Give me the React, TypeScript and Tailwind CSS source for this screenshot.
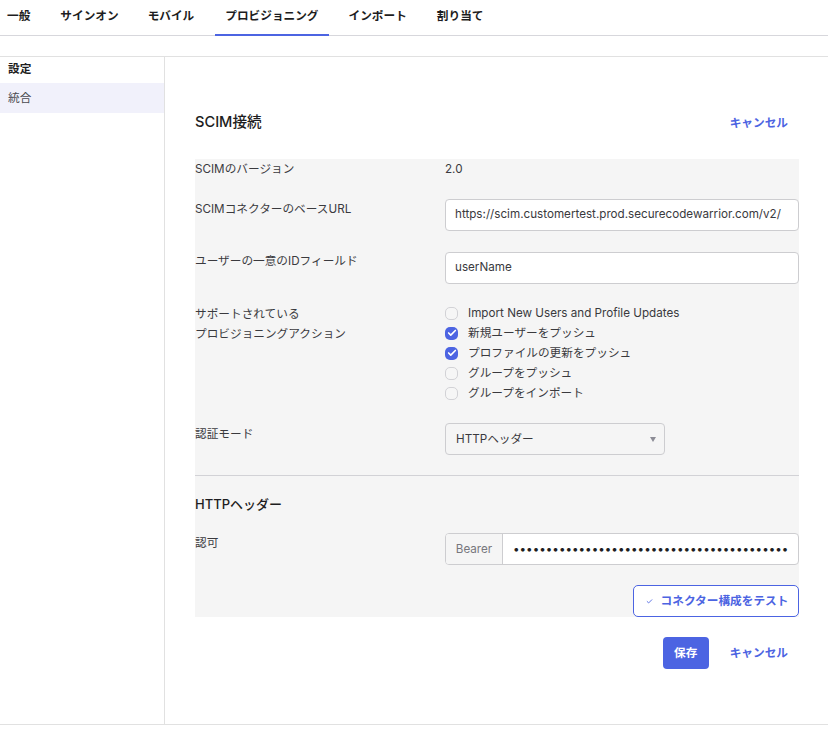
import { Check } from "lucide-react";

const font = {
  fontFamily: '"Inter", "Noto Sans CJK JP", sans-serif',
};

const tabs = [
  { label: "一般", gap: "-ml-[3px]" },
  { label: "サインオン", gap: "ml-[10px]" },
  { label: "モバイル", gap: "ml-[9px]" },
  { label: "プロビジョニング", gap: "ml-[11px]", active: true },
  { label: "インポート", gap: "ml-[10px]" },
  { label: "割り当て", gap: "ml-[10px]" },
];

const actions = [
  { label: "Import New Users and Profile Updates", on: false },
  { label: "新規ユーザーをプッシュ", on: true },
  { label: "プロファイルの更新をプッシュ", on: true },
  { label: "グループをプッシュ", on: false },
  { label: "グループをインポート", on: false },
];

function Checkbox({ on }: { on: boolean }) {
  if (on) {
    return (
      <span className="mb-[2px] flex h-[13px] w-[13px] items-center justify-center rounded-[5px] bg-[#4c64e2]">
        <Check className="h-[10px] w-[10px] text-white" strokeWidth={4} />
      </span>
    );
  }
  return <span className="mb-[2px] h-[13px] w-[13px] rounded-[5px] border border-[#d2d2d6] bg-[#f6f6f6]" />;
}

export default function App() {
  return (
    <div style={font} className="h-[734px] w-[828px] overflow-hidden bg-white text-[11.67px] text-[#1d1d21]">
      <div className="flex h-[36px] border-b border-[#d7d7dc]">
        {tabs.map((t) => (
          <div
            key={t.label}
            className={`${t.gap} flex h-[36px] items-center justify-center border-b-2 px-[10px] font-semibold whitespace-nowrap ${
              t.active ? "border-[#4c64e2]" : "border-transparent"
            }`}
          >
            {t.label}
          </div>
        ))}
      </div>

      <div className="mt-[20px] flex h-[669px] border-y border-[#e1e1e1]">
        <aside className="w-[165px] shrink-0 border-r border-[#e1e1e1]">
          <div className="flex h-[26px] items-center px-[8px] font-semibold">設定</div>
          <div className="flex h-[30px] items-center bg-[#f1f1fb] px-[8px] pt-px text-[#4a4a50]">統合</div>
        </aside>

        <main className="w-[634px] pl-[30px]">
          <div className="flex h-[102px] items-start justify-between pt-[55px]">
            <h2 className="text-[14.6px] leading-[20px] font-medium">SCIM接続</h2>
            <span className="mt-[2px] mr-[11px] leading-[18px] font-semibold text-[#4c64e2]">キャンセル</span>
          </div>

          <section className="h-[458px] bg-[#f5f5f5] text-[#3a3a3e]">
            <div className="flex h-[22px] items-center">
              <div className="w-[250px]">SCIMのバージョン</div>
              <div>2.0</div>
            </div>

            <div className="mt-[18px] flex">
              <div className="w-[250px] leading-[20px]">SCIMコネクターのベースURL</div>
              <div className="flex h-[32px] w-[354px] items-center rounded-[4px] border border-[#cdcdd0] bg-white px-[9px]">
                https://scim.customertest.prod.securecodewarrior.com/v2/
              </div>
            </div>

            <div className="mt-[21px] flex">
              <div className="w-[250px] leading-[18px]">ユーザーの一意のIDフィールド</div>
              <div className="flex h-[32px] w-[354px] items-center rounded-[4px] border border-[#cdcdd0] bg-white px-[9px]">
                userName
              </div>
            </div>

            <div className="mt-[20px] flex">
              <div className="w-[250px] leading-[20px]">
                サポートされている
                <br />
                プロビジョニングアクション
              </div>
              <div>
                {actions.map((a) => (
                  <div key={a.label} className="flex h-[20px] items-center gap-[10px]">
                    <Checkbox on={a.on} />
                    <span>{a.label}</span>
                  </div>
                ))}
              </div>
            </div>

            <div className="mt-[19px] flex">
              <div className="w-[250px] leading-[22px]">認証モード</div>
              <div className="flex h-[32px] w-[220px] items-center justify-between rounded-[4px] border border-[#cdcdd0] bg-[#f5f5f5] pt-px pr-[8px] pl-[10px]">
                <span>HTTPヘッダー</span>
                <span className="h-0 w-0 border-x-[3px] border-t-[5px] border-x-transparent border-t-[#8c8c96]" />
              </div>
            </div>

            <div className="mt-[20px] border-t border-[#d2d2d6] pt-[18px]">
              <h3 className="text-[13px] leading-[20px] font-medium text-[#1d1d21]">HTTPヘッダー</h3>
            </div>

            <div className="mt-[19px] flex">
              <div className="w-[250px] leading-[20px]">認可</div>
              <div className="flex h-[32px] w-[354px] overflow-hidden rounded-[4px] border border-[#cdcdd0] bg-white">
                <div className="flex w-[57px] items-center justify-center border-r border-[#cdcdd0] bg-[#f5f5f5] pt-px text-[#77777d]">Bearer</div>
                <div className="flex flex-1 items-center overflow-hidden pt-px pl-[10px] whitespace-nowrap text-[#1d1d21]">
                  {"•".repeat(42)}
                </div>
              </div>
            </div>

            <div className="mt-[20px] flex justify-end">
              <button className="flex h-[32px] w-[166px] items-center justify-center gap-[8px] rounded-[5px] border border-[#4c64e2] bg-white pt-px pl-[2px] font-semibold text-[#4c64e2]">
                <Check className="h-[7px] w-[7px]" strokeWidth={3} />
                コネクター構成をテスト
              </button>
            </div>
          </section>

          <div className="mt-[20px] flex items-center justify-end">
            <button className="flex h-[32px] w-[46px] items-center justify-center rounded-[4px] bg-[#4c64e2] pt-px font-semibold text-white">
              保存
            </button>
            <span className="mt-px mr-[11px] ml-[21px] font-semibold text-[#4c64e2]">キャンセル</span>
          </div>
        </main>
      </div>
    </div>
  );
}
